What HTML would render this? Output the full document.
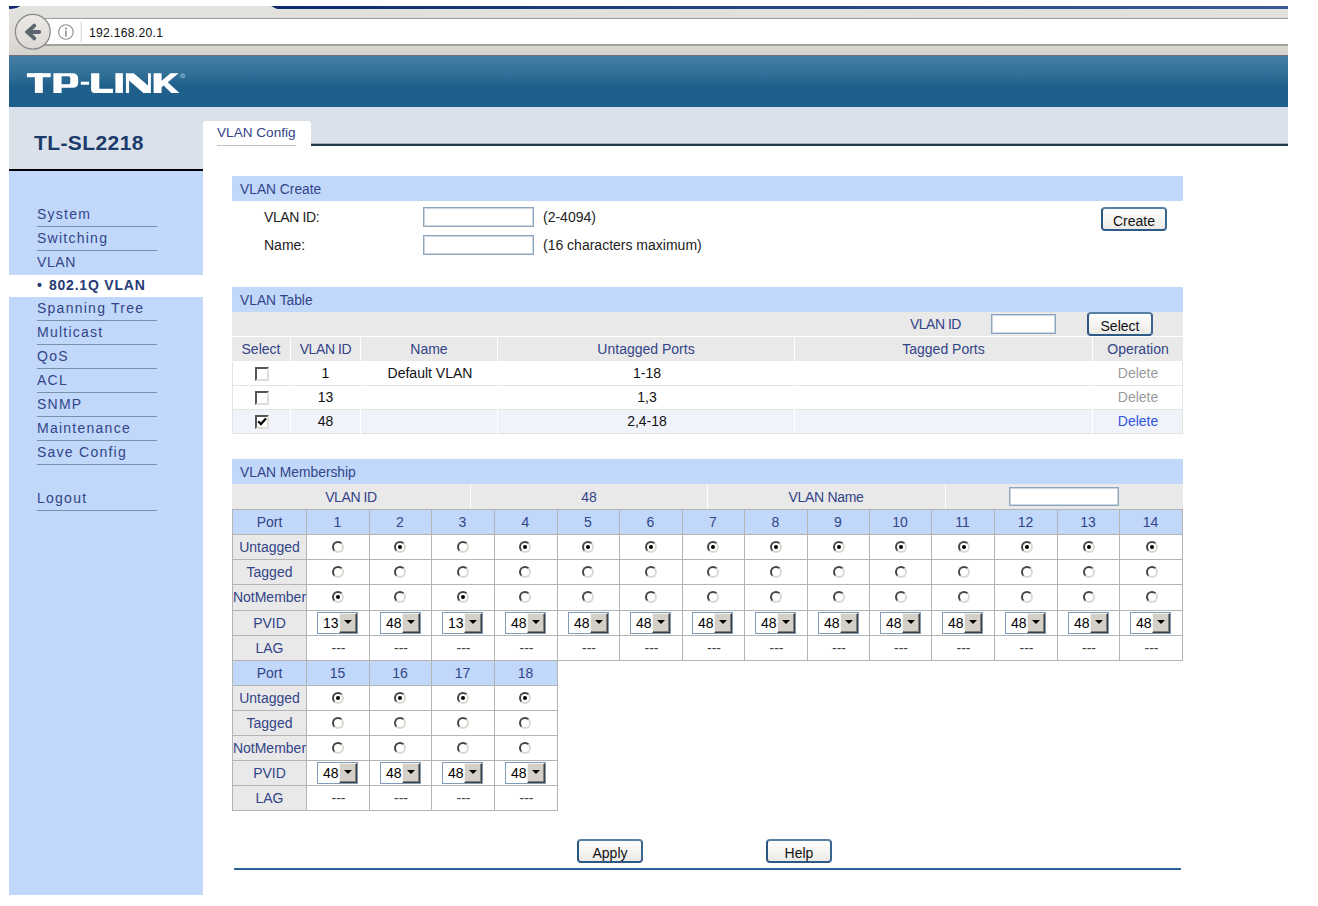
<!DOCTYPE html>
<html><head><meta charset="utf-8">
<style>
*{box-sizing:border-box;margin:0;padding:0}
html,body{width:1318px;height:906px;overflow:hidden;background:#fff;font-family:"Liberation Sans",sans-serif;}
.a{position:absolute}
#tb1{left:9px;top:6px;width:1279px;height:49px;background:linear-gradient(#e4e2de,#e2e0dc 12px,#dcd9d4 38px,#d6d2cc 49px)}
#tabline{left:300px;top:6px;width:988px;height:3px;background:linear-gradient(90deg,#0f2b6f,#223f80 35%,#3a5a9a)}
#tb1l{left:33px;top:18px;width:1255px;height:1px;background:#9c9c9c}
#addr{left:33px;top:19px;width:1255px;height:25px;background:#fff}
#tb2l{left:33px;top:44px;width:1255px;height:2px;background:#a3a19d}
#tb2{left:9px;top:46px;width:1279px;height:9px;background:#d6d2cc}
#tb2d{left:9px;top:55px;width:1279px;height:1px;background:#6a7078}
#url{left:88.5px;top:25px;font-size:13.5px;color:#111;letter-spacing:0.3px;transform:scaleX(0.9);transform-origin:0 0}
#hdr{left:9px;top:56px;width:1279px;height:51px;background:linear-gradient(#467ea4 0px,#2e6e96 20px,#1f5f8b 30px,#1f5f8b 51px)}
#band{left:9px;top:107px;width:1279px;height:39px;background:#dae1ea}
#band2{left:9px;top:146px;width:194px;height:23px;background:#dae1ea}
#blk{left:9px;top:169px;width:194px;height:2px;background:#000}
#teal{left:311px;top:144px;width:977px;height:2px;background:#1e3c48}
#tealhi{left:311px;top:143px;width:977px;height:1px;background:#9fb0b8}
#tab{left:203px;top:121px;width:108px;height:27px;background:#fff;border-radius:3px 3px 0 0}
#tabtxt{left:217px;top:124.5px;font-size:13.6px;color:#334488}
#tabul{left:217px;top:145px;width:79px;height:1px;background:#b8c6c8}
#side{left:9px;top:171px;width:194px;height:724px;background:#c1d8fb}
#sel{left:9px;top:275px;width:194px;height:22px;background:#fff}
.model{left:34px;top:131px;font-size:21px;font-weight:bold;color:#1b3b6b;letter-spacing:0.4px}
.menu{position:absolute;left:37px;width:120px;height:24px;font-size:14px;letter-spacing:1.25px;color:#334488;border-bottom:1px solid #7890a8}
.mtxt{position:absolute;left:37px;font-size:14px;letter-spacing:1.25px;color:#334488}
.bar{position:absolute;left:232px;width:951px;height:25px;background:#c1d8fb;color:#334488;font-size:13.8px;padding-left:8px;line-height:25px;padding-top:1px}
.t{position:absolute;font-size:14px;color:#222;white-space:nowrap}
.c{position:absolute;font-size:14px;white-space:nowrap;text-align:center}
.inp{position:absolute;width:111px;height:20px;border:1px solid #8da5bd;box-shadow:inset 0 0 0 1px #c9d6e2;background:#fff}
.btn{position:absolute;width:66px;height:24px;border:2px solid;border-color:#5a7fa7 #3a6590 #2f5a86 #2b5681;border-radius:4px;background:linear-gradient(#fff,#ebeae6);font-size:14px;color:#111;text-align:center;line-height:23px;padding-top:1px}
.g{position:absolute;background:#e9e9e9}
.hl{position:absolute;background:#f0f3f9}
.ln{position:absolute;background:#e4e4e4}
.wl{position:absolute;background:#fff}
.gl{position:absolute;background:#b4b4b4}
.ph{position:absolute;background:#c1d8fb}
.blu{color:#334488}
.rad{position:absolute;width:12px;height:12px;border-radius:50%;border:2px solid;border-color:#464646 #dcd9d2 #dcd9d2 #464646;transform:rotate(0deg);background:#fff}
.rad.on::after{content:"";position:absolute;left:2px;top:2px;width:4px;height:4px;border-radius:50%;background:#000}
.dd{position:absolute;width:41px;height:22px;border:1px solid #7f9db9;background:#fff;font-size:14px;color:#000;line-height:21px;padding-left:5px}
.ddb{position:absolute;right:0;top:0;width:18px;height:20px;background:#d4d0c8;border-style:solid;border-width:1px;border-color:#f4f3ee #404040 #404040 #f4f3ee;box-shadow:inset -1px -1px 0 #808080}
.ddb::after{content:"";position:absolute;left:4px;top:6px;border-style:solid;border-width:4px 4px 0 4px;border-color:#000 transparent transparent transparent}
.cb{position:absolute;width:14px;height:14px;background:#fff;border-style:solid;border-width:2px;border-color:#555 #e0ddd6 #e0ddd6 #555}
</style></head><body>
<div class="a" id="tb1"></div>
<div class="a" id="tabline"></div>
<div class="a" id="tb1l"></div>
<div class="a" id="addr"></div>
<div class="a" id="tb2l"></div>
<div class="a" id="tb2d"></div>
<svg class="a" style="left:0;top:0" width="300" height="56" viewBox="0 0 300 56">
<path d="M9 6 H20.5 Q17 8.6 11 9 H9 Z" fill="#0e2a6e"/><path d="M271.2 6 H300 V9 H278 Q276 8.8 271.2 6 Z" fill="#0e2a6e"/>
<defs><linearGradient id="bk" x1="0" y1="0" x2="0" y2="1"><stop offset="0" stop-color="#eceae6"/><stop offset="1" stop-color="#dcd9d4"/></linearGradient></defs>
<circle cx="32.8" cy="31.75" r="17.4" fill="url(#bk)" stroke="#8a8a88" stroke-width="1.3"/>
<path d="M34.3 25.6 L27.4 32 L34.3 38.4 M28.5 32 L39.2 32" fill="none" stroke="#5b6670" stroke-width="3.9" stroke-linejoin="miter" stroke-linecap="round"/>
<circle cx="65.9" cy="32" r="7.3" fill="none" stroke="#8e8e8e" stroke-width="1.1"/>
<circle cx="65.9" cy="28.6" r="1" fill="#8e8e8e"/>
<rect x="65.1" y="30.6" width="1.6" height="6" fill="#8e8e8e"/>
<rect x="80.7" y="22" width="1" height="20" fill="#cfcfcf"/>
</svg>
<div class="a" id="url">192.168.20.1</div>
<div class="a" id="hdr"></div>
<div class="a" id="band"></div>
<div class="a" id="band2"></div>
<div class="a" id="blk"></div>
<div class="a" id="tealhi"></div>
<div class="a" id="teal"></div>
<div class="a" id="tab"></div>
<div class="a" id="side"></div>
<div class="a" id="sel"></div>
<svg class="a" style="left:0;top:56px" width="200" height="51" viewBox="0 56 200 51">
<g fill="#fff">
<rect x="26.9" y="73.2" width="23.8" height="4"/>
<rect x="34.9" y="73.2" width="7.9" height="19.7"/>
<path d="M53.4 73.2 H72.5 Q78.2 73.2 78.2 78.8 V82.2 Q78.2 87.8 72.5 87.8 H61.6 V92.9 H53.4 Z M61.6 76.3 V84.3 H68.6 Q70.3 84.3 70.3 82.6 V78 Q70.3 76.3 68.6 76.3 Z" fill-rule="evenodd"/>
<rect x="80.8" y="81.7" width="8.2" height="3"/>
<path d="M91.1 73.2 H99.3 V88.8 H113 V92.9 H94.5 Q91.1 92.9 91.1 89.5 Z"/>
<rect x="115.4" y="73.2" width="7.5" height="19.7"/>
<path d="M125.9 73.2 H133.7 L148 85.5 V73.2 H150.9 V92.9 H143.4 L129.1 80.5 V92.9 H125.9 Z"/>
<path d="M153.6 73.2 H161.6 V80.8 L170.5 73.2 H178.6 L167.8 82.2 L179.4 92.9 H171.3 L163.6 85.6 L161.6 87.3 V92.9 H153.6 Z"/>
</g>
<circle cx="182.8" cy="75.8" r="2.5" fill="#7fa8cc" opacity="0.8"/><circle cx="182.8" cy="75.8" r="1.3" fill="#5d8fb8"/>
</svg>
<div class="a model">TL-SL2218</div>
<div class="a" id="tabtxt">VLAN Config</div><div class="a" id="tabul"></div>
<div class="menu" style="top:203px;line-height:23px;padding-top:0">System</div>
<div class="menu" style="top:227px;line-height:23px;padding-top:0">Switching</div>
<div class="mtxt" style="top:251px;line-height:23px;letter-spacing:0.6px">VLAN</div>
<div class="mtxt" style="top:274px;line-height:22px;font-weight:bold;color:#263a76;letter-spacing:0.8px">&bull;<span style="margin-left:6.2px">802.1Q VLAN</span></div>
<div class="menu" style="top:297px;line-height:23px">Spanning Tree</div>
<div class="menu" style="top:321px;line-height:23px">Multicast</div>
<div class="menu" style="top:345px;line-height:23px">QoS</div>
<div class="menu" style="top:369px;line-height:23px">ACL</div>
<div class="menu" style="top:393px;line-height:23px">SNMP</div>
<div class="menu" style="top:417px;line-height:23px">Maintenance</div>
<div class="menu" style="top:441px;line-height:23px">Save Config</div>
<div class="menu" style="top:487px;line-height:23px">Logout</div>
<div class="bar" style="top:176px">VLAN Create</div>
<div class="t" style="left:264px;top:209px;letter-spacing:-0.4px">VLAN ID:</div>
<div class="t" style="left:264px;top:237px">Name:</div>
<div class="inp" style="left:423px;top:207px"></div>
<div class="inp" style="left:423px;top:235px"></div>
<div class="t" style="left:543px;top:209px">(2-4094)</div>
<div class="t" style="left:543px;top:237px">(16 characters maximum)</div>
<div class="btn" style="left:1101px;top:207px">Create</div>
<div class="bar" style="top:287px">VLAN Table</div>
<div class="g" style="left:232px;top:312px;width:951px;height:24px"></div>
<div class="t blu" style="left:910px;top:316px;letter-spacing:-0.5px">VLAN ID</div>
<div class="inp" style="left:991px;top:314px;width:65px;height:20px"></div>
<div class="btn" style="left:1087px;top:312px">Select</div>
<div class="g" style="left:232px;top:337px;width:58px;height:24px"></div>
<div class="c blu" style="left:232px;top:341px;width:58px;">Select</div>
<div class="g" style="left:291px;top:337px;width:69px;height:24px"></div>
<div class="c blu" style="left:291px;top:341px;width:69px;letter-spacing:-0.4px">VLAN ID</div>
<div class="g" style="left:361px;top:337px;width:136px;height:24px"></div>
<div class="c blu" style="left:361px;top:341px;width:136px;">Name</div>
<div class="g" style="left:498px;top:337px;width:296px;height:24px"></div>
<div class="c blu" style="left:498px;top:341px;width:296px;">Untagged Ports</div>
<div class="g" style="left:795px;top:337px;width:297px;height:24px"></div>
<div class="c blu" style="left:795px;top:341px;width:297px;">Tagged Ports</div>
<div class="g" style="left:1093px;top:337px;width:90px;height:24px"></div>
<div class="c blu" style="left:1093px;top:341px;width:90px;">Operation</div>
<div class="hl" style="left:232px;top:410px;width:951px;height:23px"></div>
<div class="ln" style="left:232px;top:385px;width:951px;height:1px"></div>
<div class="ln" style="left:232px;top:409px;width:951px;height:1px"></div>
<div class="ln" style="left:232px;top:433px;width:951px;height:1px"></div>
<div class="ln" style="left:232px;top:362px;width:1px;height:72px"></div>
<div class="ln" style="left:1182px;top:362px;width:1px;height:72px"></div>
<div class="wl" style="left:290px;top:362px;width:1px;height:72px"></div>
<div class="wl" style="left:360px;top:362px;width:1px;height:72px"></div>
<div class="wl" style="left:497px;top:362px;width:1px;height:72px"></div>
<div class="wl" style="left:794px;top:362px;width:1px;height:72px"></div>
<div class="wl" style="left:1092px;top:362px;width:1px;height:72px"></div>
<div class="cb" style="left:255px;top:367px"></div>
<div class="c" style="left:291px;top:365px;width:69px;color:#111">1</div>
<div class="c" style="left:362px;top:365px;width:136px;color:#111">Default VLAN</div>
<div class="c" style="left:499px;top:365px;width:296px;color:#111">1-18</div>
<div class="c" style="left:1093px;top:365px;width:90px;color:#999">Delete</div>
<div class="cb" style="left:255px;top:391px"></div>
<div class="c" style="left:291px;top:389px;width:69px;color:#111">13</div>
<div class="c" style="left:362px;top:389px;width:136px;color:#111"></div>
<div class="c" style="left:499px;top:389px;width:296px;color:#111">1,3</div>
<div class="c" style="left:1093px;top:389px;width:90px;color:#999">Delete</div>
<div class="cb" style="left:255px;top:415px"><svg width="10" height="10" style="position:absolute;left:0;top:0"><path d="M1.3 4.3 L3.9 7.1 L9 1.4" stroke="#000" stroke-width="2.3" fill="none"/></svg></div>
<div class="c" style="left:291px;top:413px;width:69px;color:#111">48</div>
<div class="c" style="left:362px;top:413px;width:136px;color:#111"></div>
<div class="c" style="left:499px;top:413px;width:296px;color:#111">2,4-18</div>
<div class="c" style="left:1093px;top:413px;width:90px;color:#3355dd">Delete</div>
<div class="bar" style="top:459px">VLAN Membership</div>
<div class="g" style="left:232px;top:484px;width:951px;height:25px"></div>
<div class="wl" style="left:470px;top:484px;width:1px;height:25px"></div>
<div class="wl" style="left:707px;top:484px;width:1px;height:25px"></div>
<div class="wl" style="left:945px;top:484px;width:1px;height:25px"></div>
<div class="c blu" style="left:232px;top:489px;width:238px;letter-spacing:-0.4px">VLAN ID</div>
<div class="c blu" style="left:470px;top:489px;width:238px">48</div>
<div class="c blu" style="left:707px;top:489px;width:238px;letter-spacing:-0.3px">VLAN Name</div>
<div class="inp" style="left:1009px;top:487px;width:110px;height:19px"></div>
<div class="ph" style="left:232px;top:509px;width:950px;height:25px"></div>
<div class="g" style="left:232px;top:534px;width:74px;height:126px"></div>
<div class="gl" style="left:232px;top:509px;width:951px;height:1px"></div>
<div class="gl" style="left:232px;top:534px;width:951px;height:1px"></div>
<div class="gl" style="left:232px;top:559px;width:951px;height:1px"></div>
<div class="gl" style="left:232px;top:584px;width:951px;height:1px"></div>
<div class="gl" style="left:232px;top:610px;width:951px;height:1px"></div>
<div class="gl" style="left:232px;top:635px;width:951px;height:1px"></div>
<div class="gl" style="left:232px;top:660px;width:951px;height:1px"></div>
<div class="gl" style="left:232px;top:509px;width:1px;height:152px"></div>
<div class="gl" style="left:306px;top:509px;width:1px;height:152px"></div>
<div class="gl" style="left:369px;top:509px;width:1px;height:152px"></div>
<div class="gl" style="left:431px;top:509px;width:1px;height:152px"></div>
<div class="gl" style="left:494px;top:509px;width:1px;height:152px"></div>
<div class="gl" style="left:557px;top:509px;width:1px;height:152px"></div>
<div class="gl" style="left:619px;top:509px;width:1px;height:152px"></div>
<div class="gl" style="left:682px;top:509px;width:1px;height:152px"></div>
<div class="gl" style="left:744px;top:509px;width:1px;height:152px"></div>
<div class="gl" style="left:807px;top:509px;width:1px;height:152px"></div>
<div class="gl" style="left:869px;top:509px;width:1px;height:152px"></div>
<div class="gl" style="left:931px;top:509px;width:1px;height:152px"></div>
<div class="gl" style="left:994px;top:509px;width:1px;height:152px"></div>
<div class="gl" style="left:1057px;top:509px;width:1px;height:152px"></div>
<div class="gl" style="left:1119px;top:509px;width:1px;height:152px"></div>
<div class="gl" style="left:1182px;top:509px;width:1px;height:152px"></div>
<div class="c blu" style="left:232px;top:514px;width:75px">Port</div>
<div class="c blu" style="left:232px;top:539px;width:75px">Untagged</div>
<div class="c blu" style="left:232px;top:564px;width:75px">Tagged</div>
<div class="c blu" style="left:232px;top:589px;width:75px">NotMember</div>
<div class="c blu" style="left:232px;top:615px;width:75px">PVID</div>
<div class="c blu" style="left:232px;top:640px;width:75px">LAG</div>
<div class="c blu" style="left:306px;top:514px;width:63px">1</div>
<div class="rad" style="left:332px;top:541px"></div>
<div class="rad" style="left:332px;top:566px"></div>
<div class="rad on" style="left:332px;top:591px"></div>
<div class="dd" style="left:317px;top:612px">13<div class="ddb"></div></div>
<div class="c" style="left:307px;top:640px;width:63px;color:#444">---</div>
<div class="c blu" style="left:369px;top:514px;width:62px">2</div>
<div class="rad on" style="left:394px;top:541px"></div>
<div class="rad" style="left:394px;top:566px"></div>
<div class="rad" style="left:394px;top:591px"></div>
<div class="dd" style="left:380px;top:612px">48<div class="ddb"></div></div>
<div class="c" style="left:370px;top:640px;width:62px;color:#444">---</div>
<div class="c blu" style="left:431px;top:514px;width:63px">3</div>
<div class="rad" style="left:457px;top:541px"></div>
<div class="rad" style="left:457px;top:566px"></div>
<div class="rad on" style="left:457px;top:591px"></div>
<div class="dd" style="left:442px;top:612px">13<div class="ddb"></div></div>
<div class="c" style="left:432px;top:640px;width:63px;color:#444">---</div>
<div class="c blu" style="left:494px;top:514px;width:63px">4</div>
<div class="rad on" style="left:519px;top:541px"></div>
<div class="rad" style="left:519px;top:566px"></div>
<div class="rad" style="left:519px;top:591px"></div>
<div class="dd" style="left:505px;top:612px">48<div class="ddb"></div></div>
<div class="c" style="left:495px;top:640px;width:63px;color:#444">---</div>
<div class="c blu" style="left:557px;top:514px;width:62px">5</div>
<div class="rad on" style="left:582px;top:541px"></div>
<div class="rad" style="left:582px;top:566px"></div>
<div class="rad" style="left:582px;top:591px"></div>
<div class="dd" style="left:568px;top:612px">48<div class="ddb"></div></div>
<div class="c" style="left:558px;top:640px;width:62px;color:#444">---</div>
<div class="c blu" style="left:619px;top:514px;width:63px">6</div>
<div class="rad on" style="left:645px;top:541px"></div>
<div class="rad" style="left:645px;top:566px"></div>
<div class="rad" style="left:645px;top:591px"></div>
<div class="dd" style="left:630px;top:612px">48<div class="ddb"></div></div>
<div class="c" style="left:620px;top:640px;width:63px;color:#444">---</div>
<div class="c blu" style="left:682px;top:514px;width:62px">7</div>
<div class="rad on" style="left:707px;top:541px"></div>
<div class="rad" style="left:707px;top:566px"></div>
<div class="rad" style="left:707px;top:591px"></div>
<div class="dd" style="left:692px;top:612px">48<div class="ddb"></div></div>
<div class="c" style="left:683px;top:640px;width:62px;color:#444">---</div>
<div class="c blu" style="left:744px;top:514px;width:63px">8</div>
<div class="rad on" style="left:770px;top:541px"></div>
<div class="rad" style="left:770px;top:566px"></div>
<div class="rad" style="left:770px;top:591px"></div>
<div class="dd" style="left:755px;top:612px">48<div class="ddb"></div></div>
<div class="c" style="left:745px;top:640px;width:63px;color:#444">---</div>
<div class="c blu" style="left:807px;top:514px;width:62px">9</div>
<div class="rad on" style="left:833px;top:541px"></div>
<div class="rad" style="left:833px;top:566px"></div>
<div class="rad" style="left:833px;top:591px"></div>
<div class="dd" style="left:818px;top:612px">48<div class="ddb"></div></div>
<div class="c" style="left:808px;top:640px;width:62px;color:#444">---</div>
<div class="c blu" style="left:869px;top:514px;width:62px">10</div>
<div class="rad on" style="left:895px;top:541px"></div>
<div class="rad" style="left:895px;top:566px"></div>
<div class="rad" style="left:895px;top:591px"></div>
<div class="dd" style="left:880px;top:612px">48<div class="ddb"></div></div>
<div class="c" style="left:870px;top:640px;width:62px;color:#444">---</div>
<div class="c blu" style="left:931px;top:514px;width:63px">11</div>
<div class="rad on" style="left:958px;top:541px"></div>
<div class="rad" style="left:958px;top:566px"></div>
<div class="rad" style="left:958px;top:591px"></div>
<div class="dd" style="left:942px;top:612px">48<div class="ddb"></div></div>
<div class="c" style="left:932px;top:640px;width:63px;color:#444">---</div>
<div class="c blu" style="left:994px;top:514px;width:63px">12</div>
<div class="rad on" style="left:1021px;top:541px"></div>
<div class="rad" style="left:1021px;top:566px"></div>
<div class="rad" style="left:1021px;top:591px"></div>
<div class="dd" style="left:1005px;top:612px">48<div class="ddb"></div></div>
<div class="c" style="left:995px;top:640px;width:63px;color:#444">---</div>
<div class="c blu" style="left:1057px;top:514px;width:62px">13</div>
<div class="rad on" style="left:1083px;top:541px"></div>
<div class="rad" style="left:1083px;top:566px"></div>
<div class="rad" style="left:1083px;top:591px"></div>
<div class="dd" style="left:1068px;top:612px">48<div class="ddb"></div></div>
<div class="c" style="left:1058px;top:640px;width:62px;color:#444">---</div>
<div class="c blu" style="left:1119px;top:514px;width:63px">14</div>
<div class="rad on" style="left:1146px;top:541px"></div>
<div class="rad" style="left:1146px;top:566px"></div>
<div class="rad" style="left:1146px;top:591px"></div>
<div class="dd" style="left:1130px;top:612px">48<div class="ddb"></div></div>
<div class="c" style="left:1120px;top:640px;width:63px;color:#444">---</div>
<div class="ph" style="left:232px;top:660px;width:325px;height:25px"></div>
<div class="g" style="left:232px;top:685px;width:74px;height:125px"></div>
<div class="gl" style="left:232px;top:660px;width:326px;height:1px"></div>
<div class="gl" style="left:232px;top:685px;width:326px;height:1px"></div>
<div class="gl" style="left:232px;top:710px;width:326px;height:1px"></div>
<div class="gl" style="left:232px;top:735px;width:326px;height:1px"></div>
<div class="gl" style="left:232px;top:760px;width:326px;height:1px"></div>
<div class="gl" style="left:232px;top:785px;width:326px;height:1px"></div>
<div class="gl" style="left:232px;top:810px;width:326px;height:1px"></div>
<div class="gl" style="left:232px;top:660px;width:1px;height:151px"></div>
<div class="gl" style="left:306px;top:660px;width:1px;height:151px"></div>
<div class="gl" style="left:369px;top:660px;width:1px;height:151px"></div>
<div class="gl" style="left:431px;top:660px;width:1px;height:151px"></div>
<div class="gl" style="left:494px;top:660px;width:1px;height:151px"></div>
<div class="gl" style="left:557px;top:660px;width:1px;height:151px"></div>
<div class="c blu" style="left:232px;top:665px;width:75px">Port</div>
<div class="c blu" style="left:232px;top:690px;width:75px">Untagged</div>
<div class="c blu" style="left:232px;top:715px;width:75px">Tagged</div>
<div class="c blu" style="left:232px;top:740px;width:75px">NotMember</div>
<div class="c blu" style="left:232px;top:765px;width:75px">PVID</div>
<div class="c blu" style="left:232px;top:790px;width:75px">LAG</div>
<div class="c blu" style="left:306px;top:665px;width:63px">15</div>
<div class="rad on" style="left:332px;top:692px"></div>
<div class="rad" style="left:332px;top:717px"></div>
<div class="rad" style="left:332px;top:742px"></div>
<div class="dd" style="left:317px;top:762px">48<div class="ddb"></div></div>
<div class="c" style="left:307px;top:790px;width:63px;color:#444">---</div>
<div class="c blu" style="left:369px;top:665px;width:62px">16</div>
<div class="rad on" style="left:394px;top:692px"></div>
<div class="rad" style="left:394px;top:717px"></div>
<div class="rad" style="left:394px;top:742px"></div>
<div class="dd" style="left:380px;top:762px">48<div class="ddb"></div></div>
<div class="c" style="left:370px;top:790px;width:62px;color:#444">---</div>
<div class="c blu" style="left:431px;top:665px;width:63px">17</div>
<div class="rad on" style="left:457px;top:692px"></div>
<div class="rad" style="left:457px;top:717px"></div>
<div class="rad" style="left:457px;top:742px"></div>
<div class="dd" style="left:442px;top:762px">48<div class="ddb"></div></div>
<div class="c" style="left:432px;top:790px;width:63px;color:#444">---</div>
<div class="c blu" style="left:494px;top:665px;width:63px">18</div>
<div class="rad on" style="left:519px;top:692px"></div>
<div class="rad" style="left:519px;top:717px"></div>
<div class="rad" style="left:519px;top:742px"></div>
<div class="dd" style="left:505px;top:762px">48<div class="ddb"></div></div>
<div class="c" style="left:495px;top:790px;width:63px;color:#444">---</div>
<div class="btn" style="left:577px;top:839px">Apply</div>
<div class="btn" style="left:766px;top:839px">Help</div>
<div class="a" style="left:234px;top:868px;width:947px;height:2px;background:#2a6496"></div>
</body></html>
